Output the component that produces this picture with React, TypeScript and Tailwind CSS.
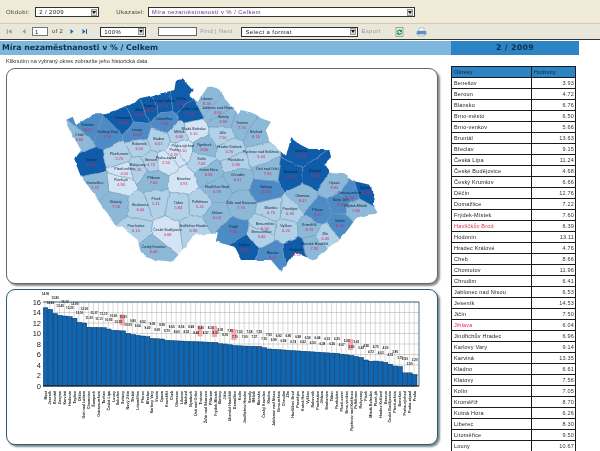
type Tone = "D" | "M" | "m" | "l" | "p";
type District = { name: string; value: string; x: number; y: number; tone: Tone };
type Point = [number, number];

const toneFill: Record<Tone, string> = {
  D: "#0f5cab",
  M: "#4d8bc7",
  m: "#8db9d9",
  l: "#b0d1e8",
  p: "#d3e5f4",
};

const west: [string, string, number, number, Tone][] = [
  ["Cheb", "8.66", 55, 195, "m"], ["Sokolov", "10.42", 80, 165, "M"], ["Karlovy Vary", "9.14", 140, 185, "M"],
  ["Tachov", "11.30", 90, 270, "D"], ["Chomutov", "11.96", 185, 142, "D"], ["Most", "14.91", 235, 118, "D"],
  ["Teplice", "13.10", 265, 107, "D"], ["Ústí nad Labem", "12.13", 305, 92, "D"], ["Děčín", "12.76", 360, 85, "D"],
  ["Česká Lípa", "11.24", 385, 115, "D"], ["Litoměřice", "9.50", 310, 145, "M"], ["Louny", "10.67", 228, 178, "M"],
  ["Liberec", "8.30", 438, 87, "m"], ["Jablonec nad Nisou", "6.53", 470, 112, "m"], ["Semily", "6.90", 487, 140, "m"],
  ["Trutnov", "7.70", 543, 158, "m"], ["Jičín", "7.50", 485, 187, "l"], ["Mladá Boleslav", "5.10", 398, 175, "p"],
  ["Mělník", "6.80", 355, 185, "l"], ["Rakovník", "6.16", 235, 222, "l"], ["Kladno", "6.61", 293, 205, "l"],
  ["Praha-východ", "3.10", 365, 227, "p"], ["Praha", "2.20", 340, 240, "p"], ["Nymburk", "8.00", 430, 225, "m"],
  ["Hradec Králové", "4.76", 505, 230, "l"], ["Kolín", "7.05", 422, 265, "l"], ["Beroun", "4.72", 270, 268, "l"],
  ["Plzeň-sever", "5.70", 175, 250, "l"], ["Plzeň-město", "4.50", 190, 295, "p"], ["Rokycany", "5.16", 230, 285, "l"],
  ["Praha-západ", "2.50", 315, 262, "p"], ["Pardubice", "5.80", 525, 270, "l"], ["Kutná Hora", "6.26", 443, 300, "m"],
  ["Chrudim", "6.41", 530, 313, "m"], ["Plzeň-jih", "4.80", 180, 330, "p"], ["Příbram", "7.60", 278, 322, "m"],
  ["Benešov", "3.93", 368, 327, "p"], ["Domažlice", "7.22", 102, 338, "m"], ["Havlíčkův Brod", "6.39", 468, 350, "m"],
  ["Žďár nad Sázavou", "7.70", 540, 397, "m"], ["Klatovy", "7.56", 165, 395, "m"], ["Písek", "5.11", 285, 385, "l"],
  ["Tábor", "5.84", 352, 397, "l"], ["Pelhřimov", "5.41", 417, 395, "l"], ["Strakonice", "6.00", 238, 405, "l"],
  ["Jihlava", "6.04", 468, 427, "m"], ["Třebíč", "9.65", 517, 470, "M"], ["Prachatice", "6.10", 225, 468, "l"],
  ["České Budějovice", "4.68", 320, 478, "p"], ["Jindřichův Hradec", "6.96", 397, 468, "l"],
  ["Český Krumlov", "6.66", 278, 530, "m"], ["Znojmo", "13.40", 550, 525, "D"],
];

const east: [string, string, number, number, Tone][] = [
  ["Náchod", "8.10", 45, 185, "m"], ["Rychnov nad Kněžnou", "5.44", 60, 245, "l"], ["Ústí nad Orlicí", "7.90", 80, 295, "m"],
  ["Svitavy", "10.20", 75, 350, "M"], ["Jeseník", "14.53", 180, 243, "D"], ["Šumperk", "11.70", 150, 305, "D"],
  ["Bruntál", "13.63", 222, 302, "D"], ["Olomouc", "8.41", 185, 378, "m"], ["Opava", "8.85", 280, 338, "m"],
  ["Karviná", "13.35", 375, 352, "D"], ["Ostrava-město", "11.50", 325, 367, "M"], ["Nový Jičín", "9.80", 300, 390, "M"],
  ["Frýdek-Místek", "7.60", 345, 408, "m"], ["Přerov", "9.20", 230, 418, "M"], ["Vsetín", "8.90", 297, 453, "M"],
  ["Prostějov", "6.30", 147, 415, "l"], ["Blansko", "6.76", 90, 413, "l"], ["Brno-město", "6.50", 72, 460, "l"],
  ["Brno-venkov", "5.66", 62, 485, "l"], ["Vyškov", "6.20", 135, 468, "l"], ["Kroměříž", "8.70", 205, 463, "m"],
  ["Zlín", "6.40", 253, 490, "l"], ["Uherské Hradiště", "7.30", 220, 522, "m"], ["Hodonín", "13.11", 165, 538, "D"],
  ["Břeclav", "9.15", 95, 548, "M"],
];

const districts: District[] = [
  ...west.map(([name, value, x, y, tone]) => ({ name, value, x: 60 + x / 3, y: 73 + y / 3, tone })),
  ...east.map(([name, value, x, y, tone]) => ({ name, value, x: 240 + x / 3, y: 73 + y / 3, tone })),
];

const outlineWest: Point[] = [
  [15, 150], [35, 140], [45, 165], [60, 155], [100, 130], [130, 130], [150, 125], [190, 110], [220, 100], [235, 85],
  [280, 75], [340, 60], [345, 30], [365, 28], [395, 60], [385, 75], [410, 95], [440, 50], [470, 50], [490, 85], [530, 130],
];
const outlineEast: Point[] = [
  [0, 120], [40, 130], [60, 145], [90, 155], [75, 180], [85, 215], [120, 245], [135, 260], [150, 205], [180, 225], [210, 240],
  [265, 240], [270, 265], [250, 285], [265, 305], [310, 310], [345, 335], [385, 345], [400, 375], [395, 400], [410, 430],
  [380, 435], [345, 445], [320, 480], [295, 510], [265, 530], [220, 570], [160, 545], [120, 605], [90, 570], [50, 570], [0, 570],
];
const outlineWestBack: Point[] = [
  [520, 530], [465, 515], [470, 490], [400, 495], [335, 575], [280, 570], [240, 550], [230, 510], [180, 470], [165, 470],
  [120, 400], [60, 320], [40, 270], [60, 240], [35, 195],
];

const outline = [
  ...outlineWest.map(([x, y]) => [60 + x / 3, 70 + y / 3]),
  ...outlineEast.map(([x, y]) => [240 + x / 3, 70 + y / 3]),
  ...outlineWestBack.map(([x, y]) => [60 + x / 3, 70 + y / 3]),
]
  .map((p) => p.join(","))
  .join(" ");

// half-plane clipping, each district is the area nearest to its label
function cell(seed: District): string {
  let poly: Point[] = [[50, 60], [400, 60], [400, 290], [50, 290]];
  for (const other of districts) {
    if (other === seed) continue;
    const mx = (seed.x + other.x) / 2;
    const my = (seed.y + other.y) / 2;
    const nx = other.x - seed.x;
    const ny = other.y - seed.y;
    const side = (p: Point) => (p[0] - mx) * nx + (p[1] - my) * ny;
    const next: Point[] = [];
    poly.forEach((a, i) => {
      const b = poly[(i + 1) % poly.length];
      const sa = side(a);
      const sb = side(b);
      if (sa <= 0) next.push(a);
      if (sa < 0 !== sb < 0) {
        const t = sa / (sa - sb);
        next.push([a[0] + (b[0] - a[0]) * t, a[1] + (b[1] - a[1]) * t]);
      }
    });
    poly = next;
  }
  return poly.map((p) => p.join(",")).join(" ");
}

const curve: Point[] = [
  [0, 14.9], [1, 14.6], [2, 13.8], [3, 13.45], [5, 13.2], [6, 12.9], [7, 12.1], [8, 12], [9, 11.2], [12, 11.1], [14, 10.6], [16, 10.5],
  [17, 10], [18.5, 9.7], [21, 9.4], [22, 9.05], [24, 8.95], [25, 8.7], [27, 8.6], [32, 8.4], [35, 8.3], [36, 8.05], [37, 8], [39, 7.7],
  [41, 7.6], [44, 7.55], [46, 7.05], [50, 6.8], [55, 6.5], [60, 6.2], [63, 5.8], [65, 5.45], [66.5, 4.7], [68, 4.75], [70, 4.5],
  [72, 3.8], [73, 3.7], [73.5, 2.5], [75, 2.5], [76, 2.2],
];

function curveAt(i: number): number {
  for (let k = 1; k < curve.length; k++) {
    if (i <= curve[k][0]) {
      const [x0, y0] = curve[k - 1];
      const [x1, y1] = curve[k];
      return y0 + ((y1 - y0) * (i - x0)) / (x1 - x0);
    }
  }
  return 2.2;
}

const barNames = [...districts].sort((a, b) => parseFloat(b.value) - parseFloat(a.value)).map((d) => d.name);
const plot = { left: 42, right: 418, top: 302, bottom: 386 };
const barStep = (plot.right - plot.left - 2) / 77;
const barY = (value: number) => plot.bottom - (value * (plot.bottom - plot.top)) / 16;
const pinkBars = [16, 32, 35, 39, 63];

// the steep first bars need a wider gap between the two label tiers
function labelOffset(i: number): number {
  if (i === 1) return 5;
  if (i === 2) return 15;
  return i % 2 === 0 ? 13 : 8;
}

const rows: [string, string][] = [
  ["Benešov", "3.93"], ["Beroun", "4.72"], ["Blansko", "6.76"], ["Brno-město", "6.50"], ["Brno-venkov", "5.66"],
  ["Bruntál", "13.63"], ["Břeclav", "9.15"], ["Česká Lípa", "11.24"], ["České Budějovice", "4.68"], ["Český Krumlov", "6.66"],
  ["Děčín", "12.76"], ["Domažlice", "7.22"], ["Frýdek-Místek", "7.60"], ["Havlíčkův Brod", "6.39"], ["Hodonín", "13.11"],
  ["Hradec Králové", "4.76"], ["Cheb", "8.66"], ["Chomutov", "11.96"], ["Chrudim", "6.41"], ["Jablonec nad Nisou", "6.53"],
  ["Jeseník", "14.53"], ["Jičín", "7.50"], ["Jihlava", "6.04"], ["Jindřichův Hradec", "6.96"], ["Karlovy Vary", "9.14"],
  ["Karviná", "13.35"], ["Kladno", "6.61"], ["Klatovy", "7.56"], ["Kolín", "7.05"], ["Kroměříž", "8.70"],
  ["Kutná Hora", "6.26"], ["Liberec", "8.30"], ["Litoměřice", "9.50"], ["Louny", "10.67"],
];
const redRows = ["Havlíčkův Brod", "Jihlava"];

function SelectBox({ label, width, pink }: { label: string; width: string; pink?: boolean }) {
  return (
    <div className={`flex h-[10px] items-center justify-between border border-[#333] bg-white pl-[3px] ${width}`}>
      <span className={`text-[6px] leading-none tracking-[0.4px] ${pink ? "text-[#7a2d8a]" : "text-[#222]"}`}>{label}</span>
      <span className="mr-px flex h-[7px] w-[6px] items-center justify-center border border-[#999] bg-[#ddd]">
        <svg width="4" height="3" viewBox="0 0 4 3">
          <path d="M0 0h4L2 3z" fill="#111" />
        </svg>
      </span>
    </div>
  );
}

function NavArrow({ dir, bar, color }: { dir: "l" | "r"; bar?: boolean; color: string }) {
  return (
    <svg width="7" height="7" viewBox="0 0 7 7" fill={color}>
      {dir === "l" ? <path d="M5.5 1v5L2.5 3.5z" /> : <path d="M1.5 1v5l3-2.5z" />}
      {bar ? <rect x={dir === "l" ? 0.8 : 5} y="1" width="1" height="5" /> : null}
    </svg>
  );
}

function MapPanel() {
  return (
    <div className="h-[216px] w-[432px] overflow-hidden rounded-[9px] border border-[#666] bg-white shadow-[2px_2px_2px_#8a8a8a]">
      <svg width="432" height="216" viewBox="6 69 432 216">
        <defs>
          <clipPath id="country">
            <polygon points={outline} />
          </clipPath>
          <filter id="rough" x="6" y="69" width="432" height="216" filterUnits="userSpaceOnUse" colorInterpolationFilters="sRGB">
            <feTurbulence type="fractalNoise" baseFrequency="0.09" numOctaves="2" seed="4" />
            <feDisplacementMap in="SourceGraphic" scale="4" xChannelSelector="R" yChannelSelector="G" />
          </filter>
        </defs>
        <g filter="url(#rough)">
          <g clipPath="url(#country)">
            {districts.map((d) => (
              <polygon key={d.name} points={cell(d)} fill={toneFill[d.tone]} stroke="#6f93b3" strokeWidth="0.5" />
            ))}
          </g>
        </g>
        <g fontFamily="'Liberation Sans', sans-serif" textAnchor="middle">
          {districts.map((d) => (
            <g key={d.name}>
              <text x={d.x} y={d.y - 1.6} fontSize="3.6" fill="#10233a">
                {d.name}
              </text>
              <text x={d.x} y={d.y + 3.2} fontSize="4" fill="#e0205f">
                {d.value}
              </text>
            </g>
          ))}
        </g>
      </svg>
    </div>
  );
}

function ChartPanel() {
  const bars = Array.from({ length: 77 }, (_, i) => curveAt(i));
  return (
    <div className="h-[156px] w-[432px] overflow-hidden rounded-[9px] border border-[#2d5a70] bg-white shadow-[2px_2px_2px_#7c8a90]">
      <svg width="432" height="156" viewBox="6 290 432 156" fontFamily="'Liberation Sans', sans-serif">
        {bars.map((_, i) => (
          <line key={i} x1={plot.left + i * barStep + 2} x2={plot.left + i * barStep + 2} y1={plot.top} y2={plot.bottom} stroke="#b5b5b5" strokeWidth="0.5" />
        ))}
        {[0, 2, 4, 6, 8, 10, 12, 14, 16].map((tick) => (
          <g key={tick}>
            <line x1={plot.left} x2={plot.right} y1={barY(tick)} y2={barY(tick)} stroke="#a8a8a8" strokeWidth="0.5" />
            <text x={plot.left - 2} y={barY(tick) + 2.8} fontSize="7.5" textAnchor="end" fill="#222">
              {tick}
            </text>
          </g>
        ))}
        <path d={`M${plot.left} ${plot.top}H${plot.right}V${plot.bottom}`} fill="none" stroke="#1f5068" strokeWidth="0.8" />
        {bars.map((value, i) => (
          <rect key={i} x={plot.left + i * barStep + 0.3} y={barY(value)} width={barStep - 0.3} height={plot.bottom - barY(value)} fill="#0f66b2" stroke="#08305a" strokeWidth="0.5" />
        ))}
        <line x1={plot.left} x2={plot.right} y1={plot.bottom} y2={plot.bottom} stroke="#111" strokeWidth="1" />
        {pinkBars.map((i) => (
          <rect key={i} x={plot.left + i * barStep - 1} y={barY(bars[i]) - 16.5} width="5" height="11" fill="#f6a5ad" />
        ))}
        {bars.map((value, i) => (
          <text key={i} x={plot.left + i * barStep + 2.5} y={barY(value) - labelOffset(i)} fontSize="3" fontWeight="bold" textAnchor="middle" fill="#222">
            {value.toFixed(2)}
          </text>
        ))}
        {barNames.map((name, i) => {
          const x = plot.left + i * barStep + 3.6;
          return (
            <text key={name} x={x} y={391} fontSize="3.7" fontWeight="bold" textAnchor="end" fill="#222" transform={`rotate(-90 ${x} 391)`}>
              {name}
            </text>
          );
        })}
      </svg>
    </div>
  );
}

export default function App() {
  return (
    <div className="h-[451px] w-[600px] overflow-hidden bg-white font-['Liberation_Sans',sans-serif] blur-[0.3px]">
      <div className="flex h-[23px] items-center bg-[#f0ead8] pl-[6px] pt-px text-[6px] tracking-[0.4px] text-[#444]">
        <span className="mr-[5px]">Období:</span>
        <SelectBox label="2 / 2009" width="w-[64px]" />
        <span className="ml-[17px] mr-[3px]">Ukazatel:</span>
        <SelectBox label="Míra nezaměstnanosti v % / Celkem" width="w-[267px]" pink />
      </div>
      <div className="flex h-[17px] items-center border-y border-t-[#cfcabb] border-b-[#333] bg-[#e9e6da] pl-[6px] text-[6px] tracking-[0.3px] text-[#777]">
        <NavArrow dir="l" bar color="#9a9a9a" />
        <span className="ml-[7px]">
          <NavArrow dir="l" color="#9a9a9a" />
        </span>
        <div className="ml-[5px] h-[9px] w-[16px] border border-[#777] bg-white pl-[2px] text-[6px] leading-[8px] text-[#222]">1</div>
        <span className="ml-[4px] text-[#444]">of 2</span>
        <span className="ml-[6px]">
          <NavArrow dir="r" color="#1f5fa8" />
        </span>
        <span className="ml-[5px]">
          <NavArrow dir="r" bar color="#1f5fa8" />
        </span>
        <div className="ml-[12px]">
          <SelectBox label="100%" width="w-[46px]" />
        </div>
        <div className="ml-[12px] h-[9px] w-[39px] border border-[#666] bg-white" />
        <span className="ml-[3px] text-[#999]">Find | Next</span>
        <div className="ml-[9px]">
          <SelectBox label="Select a format" width="w-[117px]" />
        </div>
        <span className="ml-[3px] text-[#999]">Export</span>
        <svg className="ml-[14px]" width="9" height="10" viewBox="0 0 9 10">
          <rect x="1" y="0.5" width="7" height="9" fill="#dfeee2" stroke="#5d8a70" strokeWidth="0.6" />
          <path d="M2 5a2.5 2.5 0 0 1 4.500-1.500L7 2v3H4.500l1-.8A1.500 1.500 0 0 0 3 5zM7 5.500a2.500 2.500 0 0 1-4.500 1.500L2 8V5.500h2.500l-1 .8A1.500 1.500 0 0 0 6 5.500z" fill="#1f8a4c" />
        </svg>
        <svg className="ml-[12px]" width="11" height="10" viewBox="0 0 11 10">
          <path d="M3 1h5v3H3z" fill="#fff" stroke="#7e93a8" strokeWidth="0.5" />
          <path d="M1 4h9l.5 3.500H.5z" fill="#5f8fc4" />
          <rect x="2.500" y="7" width="6" height="2" fill="#dfe6ee" stroke="#7e93a8" strokeWidth="0.4" />
        </svg>
      </div>
      <div className="mt-px flex h-[14px] items-center">
        <div className="h-full w-[451px] bg-[#7db8dc] pl-[2px] font-['DejaVu_Sans',sans-serif] text-[7.8px] font-bold leading-[14px] text-[#0d2f4a]">
          Míra nezaměstnanosti v % / Celkem
        </div>
        <div className="h-full w-[128px] bg-[#2c84c4] text-center font-['DejaVu_Sans',sans-serif] text-[7.8px] font-bold leading-[14px] tracking-[0.3px] text-[#0d2f4a]">
          2 / 2009
        </div>
      </div>
      <div className="flex">
        <div className="w-[451px] pl-[6px]">
          <p className="h-[13px] pt-[3px] text-[5.6px] leading-[7px] text-[#333]">Kliknutím na vybraný okres zobrazíte jeho historická data</p>
          <MapPanel />
          <div className="mt-[5px]">
            <ChartPanel />
          </div>
        </div>
        <div className="pt-[11px]">
          <table className="w-[124px] table-fixed border-collapse text-[5.5px] tracking-[0.2px]">
            <colgroup>
              <col className="w-[80px]" />
              <col className="w-[44px]" />
            </colgroup>
            <thead>
              <tr className="h-[11px] bg-[#2c84c4] text-[#123]">
                <th className="border border-[#1a1a1a] pl-[2px] text-left font-normal">Okresy</th>
                <th className="border border-[#1a1a1a] pl-[2px] text-left font-normal">Hodnoty</th>
              </tr>
            </thead>
            <tbody>
              {rows.map(([name, value]) => (
                <tr key={name} className="h-[11px]">
                  <td className={`border border-[#1a1a1a] pl-[2px] ${redRows.includes(name) ? "text-[#e0304a]" : "text-[#222]"}`}>{name}</td>
                  <td className="border border-[#1a1a1a] pr-[1px] text-right text-[#333]">{value}</td>
                </tr>
              ))}
            </tbody>
          </table>
        </div>
      </div>
    </div>
  );
}
